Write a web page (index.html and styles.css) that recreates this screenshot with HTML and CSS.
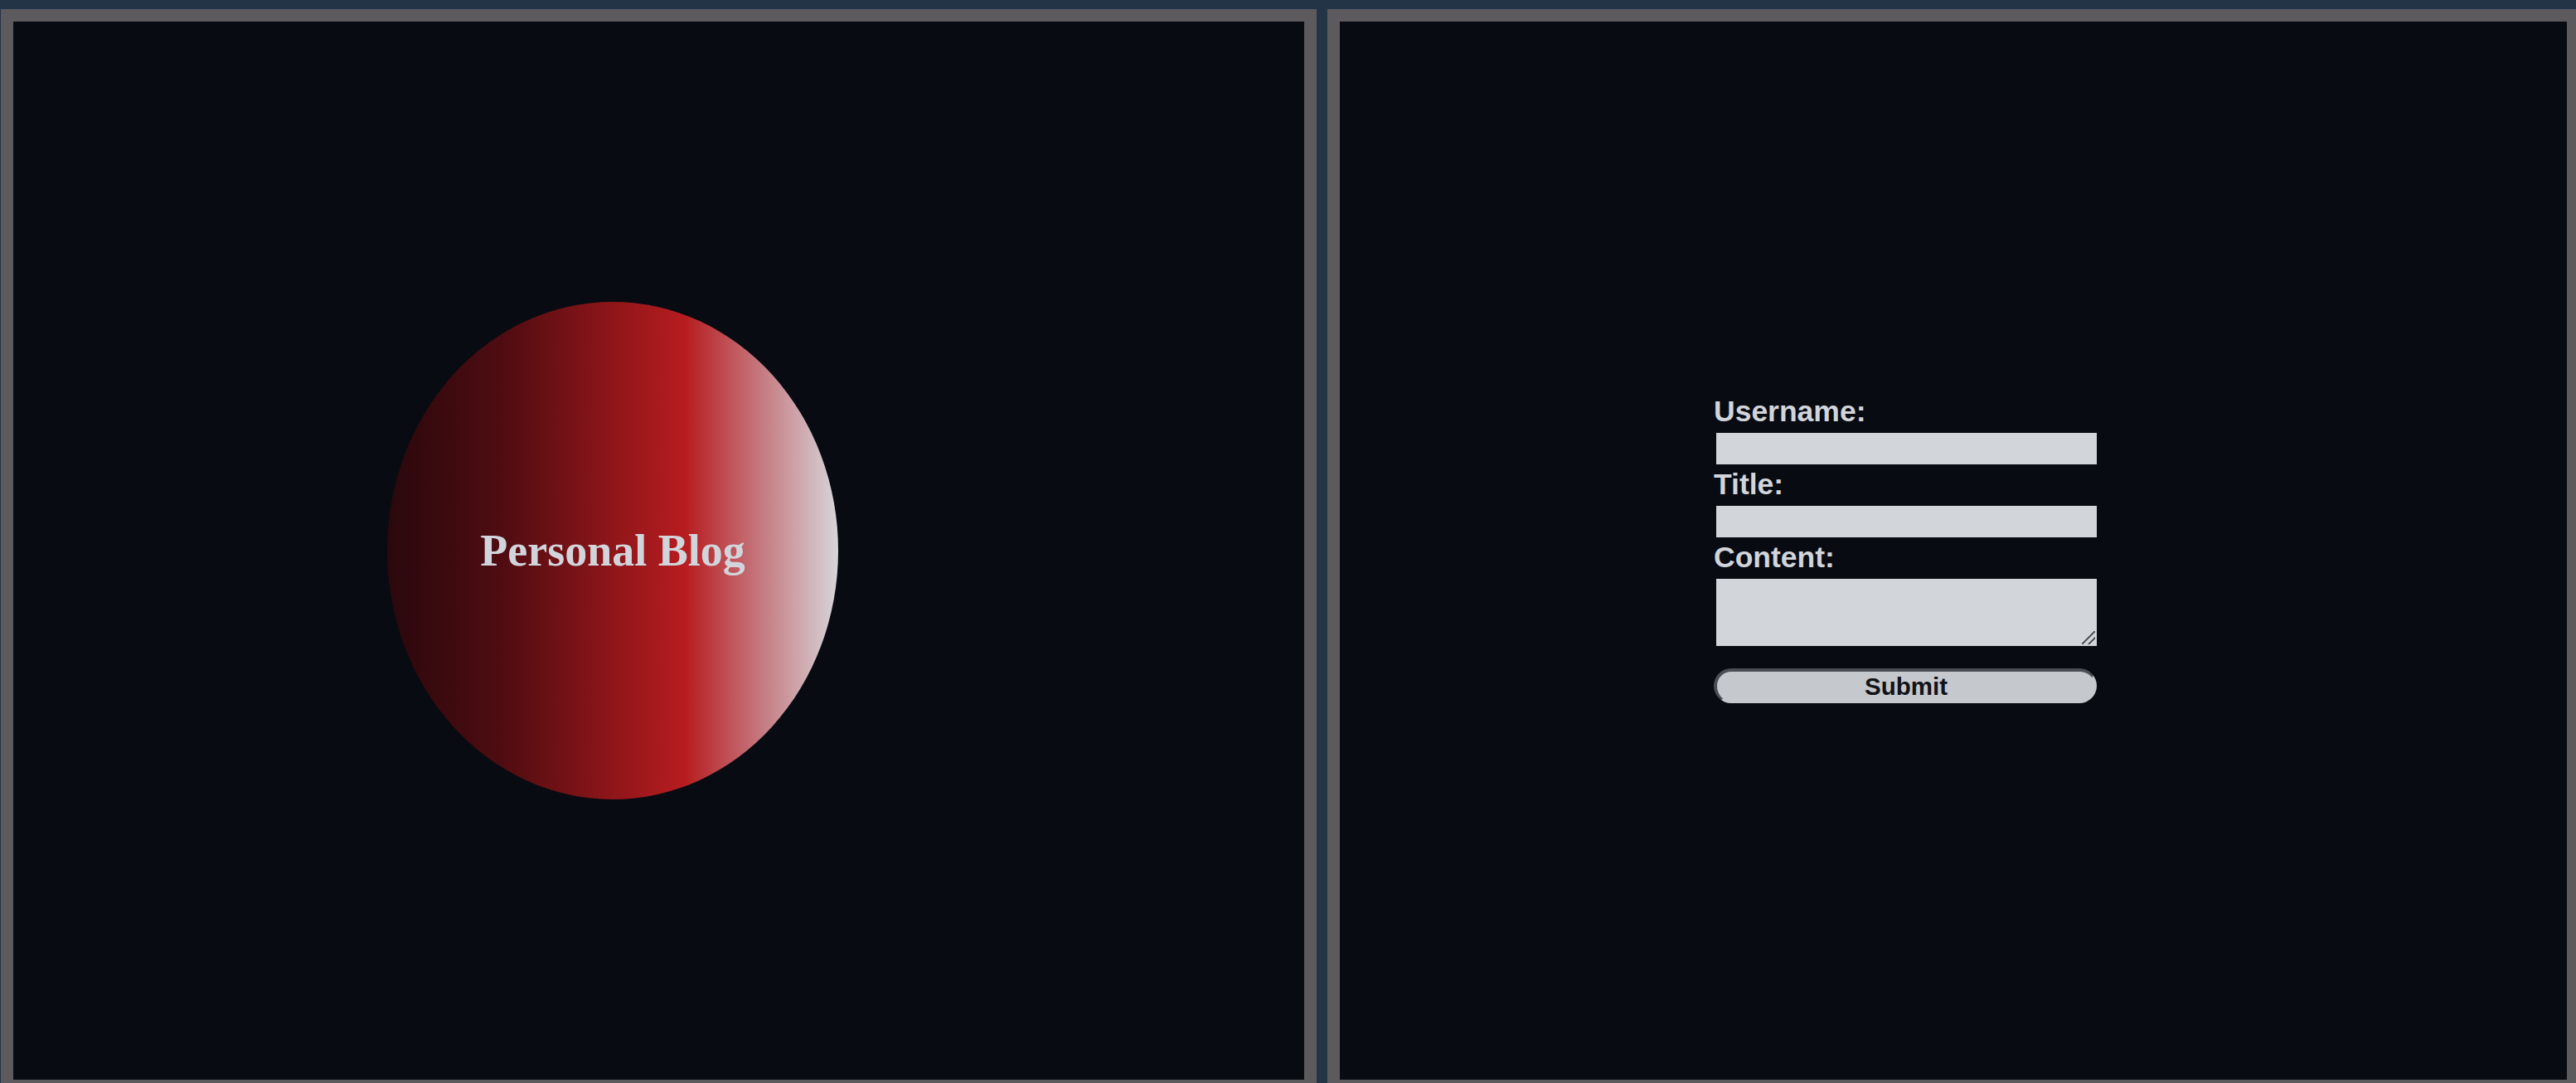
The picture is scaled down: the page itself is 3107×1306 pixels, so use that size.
FILE: index.html
```html
<!DOCTYPE html>
<html lang="en">
<head>
<meta charset="utf-8">
<title>Personal Blog</title>
<link rel="stylesheet" href="styles.css">
</head>
<body>
  <div class="layout">
    <section class="panel panel-left">
      <div class="orb">
        <h1 class="orb-title">Personal Blog</h1>
      </div>
    </section>
    <section class="panel panel-right">
      <form class="post-form">
        <label class="field-label" for="username">Username:</label>
        <input class="field-input" type="text" id="username" name="username">
        <label class="field-label" for="title">Title:</label>
        <input class="field-input" type="text" id="title" name="title">
        <label class="field-label" for="content">Content:</label>
        <textarea class="field-area" id="content" name="content"></textarea>
        <button class="submit-btn" type="submit">Submit</button>
      </form>
    </section>
  </div>
</body>
</html>
```

FILE: styles.css
```css
html {
  overflow: hidden;
}

body {
  margin: 0;
  background: #243447;
}

.layout {
  display: flex;
  gap: 13px;
  padding: 11px 0 0 1px;
}

.panel {
  flex-shrink: 0;
  box-sizing: border-box;
  height: 100vh;
  border: 15px solid #5d5a5e;
  background: #080b11;
  display: flex;
  align-items: center;
  padding-left: 451px;
}

.panel-left {
  width: 1587px;
  padding-bottom: 1px;
}

.panel-right {
  width: 1510px;
  padding-bottom: 5px;
}

.orb {
  width: 544px;
  height: 600px;
  border-radius: 50%;
  background: linear-gradient(to right, #2a080c 0%, #4e0c11 25%, #b71c1f 66%, #c5747b 82%, #d6d6da 100%);
  display: flex;
  align-items: center;
  justify-content: center;
}

.orb-title {
  margin: 0;
  font-family: "Liberation Serif", "Times New Roman", serif;
  font-weight: bold;
  font-size: 54px;
  color: #d1d5db;
}

.post-form {
  width: 462px;
  display: flex;
  flex-direction: column;
  align-items: flex-start;
  font-family: "Liberation Sans", Arial, sans-serif;
}

.field-label {
  display: block;
  font-weight: bold;
  font-size: 35.5px;
  line-height: normal;
  color: #d1d5db;
}

.field-input,
.field-area {
  display: block;
  box-sizing: border-box;
  width: 459px;
  margin: 5px 0 4px 3px;
  padding: 2px 4px;
  border: none;
  background-color: #d2d5d9;
  font-family: "Liberation Sans", Arial, sans-serif;
  font-size: 20px;
  outline: none;
}

.field-input {
  height: 38px;
}

.field-area {
  height: 81px;
  margin-bottom: 0;
  resize: none;
  background-image: linear-gradient(135deg, transparent 45%, #55585d 45%, #55585d 55%, transparent 55%, transparent 71%, #55585d 71%, #55585d 81%, transparent 81%);
  background-repeat: no-repeat;
  background-size: 16px 16px;
  background-position: right 2px bottom 2px;
}

.submit-btn {
  box-sizing: border-box;
  width: 462px;
  height: 42px;
  margin-top: 27px;
  padding: 0;
  border-style: solid;
  border-width: 4px 2px 2px 4px;
  border-color: #4b4f55 #c5c8cc #c5c8cc #4b4f55;
  border-radius: 21px;
  background: #c5c8cc;
  color: #111317;
  font-family: "Liberation Sans", Arial, sans-serif;
  font-weight: bold;
  font-size: 29.5px;
  line-height: 1;
}
```
